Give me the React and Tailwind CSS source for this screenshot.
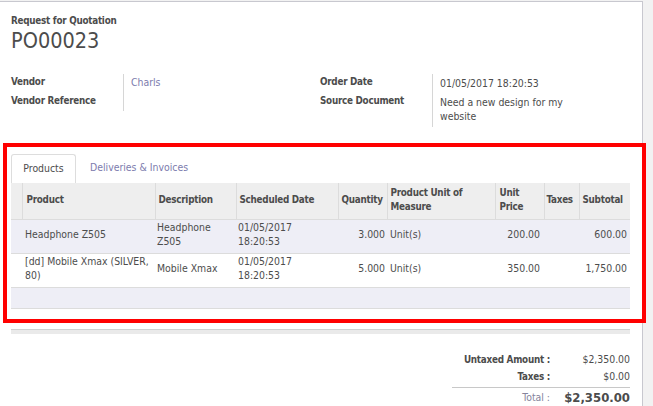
import React from "react";

const LINES = [
  {
    product: "Headphone Z505",
    description: ["Headphone", "Z505"],
    date: ["01/05/2017", "18:20:53"],
    qty: "3.000",
    uom: "Unit(s)",
    price: "200.00",
    taxes: "",
    subtotal: "600.00",
  },
  {
    product: "[dd] Mobile Xmax (SILVER, 80)",
    description: ["Mobile Xmax"],
    date: ["01/05/2017", "18:20:53"],
    qty: "5.000",
    uom: "Unit(s)",
    price: "350.00",
    taxes: "",
    subtotal: "1,750.00",
  },
];

export default function App() {
  return (
    <div className="relative flex h-[406px] w-[653px] overflow-hidden bg-[#f2f2f2] font-['DejaVu_Sans_Condensed','Liberation_Sans',Arial,sans-serif] text-[10.4px] text-[#4c4c4c]">
      <div className="mt-px h-[420px] w-[643px] border-r border-t border-[#c8c8cf] bg-white px-[11px] pt-[12px]">
        <div className="text-[9.8px] leading-[14px] font-bold tracking-[-0.25px]">Request for Quotation</div>
        <h1 className="text-[21.5px] leading-[26px]">PO00023</h1>

        <div className="mt-[20px] flex h-[53px] items-start">
          <div className="flex w-[309px]">
            <div className="flex h-[37px] w-[113px] flex-col gap-[6px] border-r border-[#d6d6d6] pt-[1px] text-[9.8px] font-bold tracking-[-0.25px]">
              <span className="leading-[13px]">Vendor</span>
              <span className="leading-[13px]">Vendor Reference</span>
            </div>
            <div className="pl-[7px] pt-[2px] leading-[13px] text-[#7c7bad]">Charls</div>
          </div>
          <div className="flex">
            <div className="flex h-[53px] w-[113px] flex-col gap-[6px] border-r border-[#d6d6d6] pt-[1px] text-[9.8px] font-bold tracking-[-0.25px]">
              <span className="leading-[13px]">Order Date</span>
              <span className="leading-[13px]">Source Document</span>
            </div>
            <div className="flex w-[140px] flex-col gap-[5px] pl-[7px] pt-[2px] leading-[14px]">
              <span>01/05/2017 18:20:53</span>
              <span>Need a new design for my website</span>
            </div>
          </div>
        </div>

        <div className="mt-[27px] flex h-[29px] items-end">
          <div className="flex h-[29px] w-[65px] items-center justify-center rounded-t-[3px] border border-b-0 border-[#dddddd] bg-white pb-[1px]">
            Products
          </div>
          <div className="flex h-[29px] items-center px-[14px] pb-[1px] text-[#7c7bad]">Deliveries &amp; Invoices</div>
        </div>

        <table className="w-[619px] table-fixed border-collapse">
          <colgroup>
            <col className="w-[11px]" />
            <col className="w-[133px]" />
            <col className="w-[81px]" />
            <col className="w-[102px]" />
            <col className="w-[49px]" />
            <col className="w-[108px]" />
            <col className="w-[49px]" />
            <col className="w-[35px]" />
            <col className="w-[51px]" />
          </colgroup>
          <thead>
            <tr className="h-[36px] bg-[#eeeeee] text-left text-[9.8px] font-bold leading-[14px] tracking-[-0.25px]">
              <th className="border-r border-[#dcdcdc]" />
              <th className="border-r border-[#dcdcdc] px-[4px] pb-[2px]">Product</th>
              <th className="border-r border-[#dcdcdc] px-[3px] pb-[2px]">Description</th>
              <th className="border-r border-[#dcdcdc] px-[3px] pb-[2px]">Scheduled Date</th>
              <th className="border-r border-[#dcdcdc] px-[3px] pb-[2px]">Quantity</th>
              <th className="border-r border-[#dcdcdc] px-[3px] pb-[2px]">Product Unit of Measure</th>
              <th className="border-r border-[#dcdcdc] px-[4px] pb-[2px]">Unit Price</th>
              <th className="border-r border-[#dcdcdc] px-[2px] pb-[2px]">Taxes</th>
              <th className="px-[3px] pb-[2px]">Subtotal</th>
            </tr>
          </thead>
          <tbody className="leading-[13.5px]">
            {LINES.map((l, i) => (
              <tr
                key={i}
                className={`h-[34px] border-t border-[#dcdcdc] ${i % 2 === 0 ? "bg-[#eeeef6]" : "bg-white"}`}
              >
                <td />
                <td className="px-[3px] pb-[3px]">{l.product}</td>
                <td className="px-[2px] pb-[3px]">
                  {l.description.map((d) => (
                    <div key={d}>{d}</div>
                  ))}
                </td>
                <td className="px-[2px] pb-[3px]">
                  {l.date.map((d) => (
                    <div key={d}>{d}</div>
                  ))}
                </td>
                <td className="px-[2px] pb-[3px] text-right">{l.qty}</td>
                <td className="px-[3px] pb-[3px]">{l.uom}</td>
                <td className="px-[4px] pb-[3px] text-right">{l.price}</td>
                <td className="px-[2px] pb-[3px]">{l.taxes}</td>
                <td className="px-[3px] pb-[3px] text-right">{l.subtotal}</td>
              </tr>
            ))}
            <tr className="h-[21px] border-y border-[#dcdcdc] bg-[#eeeef6]">
              <td colSpan={9} />
            </tr>
          </tbody>
        </table>

        <div className="mt-[20px] h-[5px] w-[619px] border-t border-[#d0d0d0] bg-[#eaeaea]" />

        <div className="mt-[17px] flex w-[619px] justify-end">
          <table className="w-[178px] table-fixed border-collapse">
            <colgroup>
              <col className="w-[106px]" />
              <col className="w-[72px]" />
            </colgroup>
            <tbody>
              <tr className="h-[18px]">
                <td className="pr-[8px] pt-[1px] text-right text-[9.8px] font-bold tracking-[-0.25px]">Untaxed Amount :</td>
                <td className="pt-[1px] text-right">$2,350.00</td>
              </tr>
              <tr className="h-[19px]">
                <td className="pr-[8px] pb-[1px] text-right text-[9.8px] font-bold tracking-[-0.25px]">Taxes :</td>
                <td className="pb-[1px] text-right">$0.00</td>
              </tr>
              <tr className="h-[20px] border-t border-[#c8c8c8]">
                <td className="pr-[8px] text-right text-[#85849c]">Total :</td>
                <td className="text-right text-[13px] font-bold">$2,350.00</td>
              </tr>
            </tbody>
          </table>
        </div>
      </div>

      <div className="pointer-events-none absolute left-[3px] top-[143px] h-[180px] w-[643px] border-[4px] border-[#ff0000]" />
    </div>
  );
}
